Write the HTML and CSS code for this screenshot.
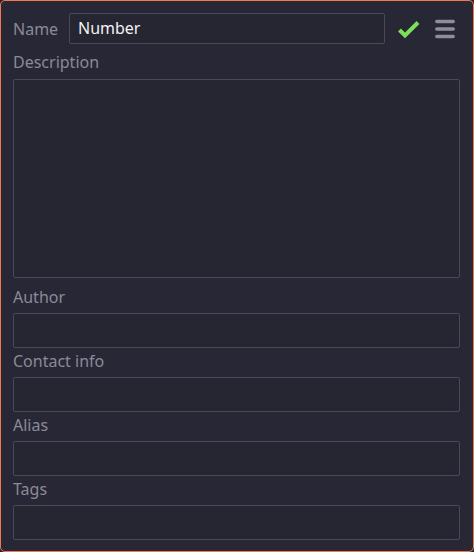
FILE: index.html
```html
<!DOCTYPE html>
<html>
<head>
<meta charset="utf-8">
<link rel="stylesheet" href="styles.css">
</head>
<body>
<div class="panel">
  <div class="name-row">
    <span class="label name-label">Name</span>
    <div class="field name-field">Number</div>
    <svg class="check" width="24" height="24" viewBox="0 0 24 24"><polyline points="3.5,13 9,18.5 22,5.5" fill="none" stroke="#7ee05a" stroke-width="4" stroke-linejoin="miter"/></svg>
    <svg class="menu" width="20" height="24" viewBox="0 0 20 24"><g stroke="#8e8d99" stroke-width="3.5" stroke-linecap="round"><line x1="1.8" y1="4.5" x2="18.2" y2="4.5"/><line x1="1.8" y1="12" x2="18.2" y2="12"/><line x1="1.8" y1="19.5" x2="18.2" y2="19.5"/></g></svg>
  </div>
  <div class="label block-label desc-label">Description</div>
  <div class="field area"></div>
  <div class="label block-label author-label">Author</div>
  <div class="field line"></div>
  <div class="label block-label">Contact info</div>
  <div class="field line"></div>
  <div class="label block-label">Alias</div>
  <div class="field line"></div>
  <div class="label block-label">Tags</div>
  <div class="field line"></div>
</div>
</body>
</html>
```
FILE: styles.css
```css
html, body {
  margin: 0;
  padding: 0;
  background: #282735;
}
.panel {
  box-sizing: border-box;
  width: 474px;
  height: 552px;
  border: 1px solid #f07a4c;
  border-radius: 5px;
  background: #282735;
  padding: 12px 13px 10px 12px;
  font-family: "Noto Sans", sans-serif;
  font-size: 16px;
  display: flex;
  flex-direction: column;
}
.label {
  color: #8b8a97;
  line-height: 20px;
}
.name-row {
  display: flex;
  align-items: center;
  height: 31px;
  flex-shrink: 0;
}
.name-label {
  width: 56px;
}
.field {
  box-sizing: border-box;
  border: 1px solid #4a4958;
  border-radius: 2px;
  background: #262532;
  flex-shrink: 0;
}
.name-field {
  width: 316px;
  height: 31px;
  color: #f2f2f4;
  padding: 0 8px;
  line-height: 29px;
}
.check {
  margin-left: 11px;
}
.menu {
  margin-left: 15px;
}
.block-label {
  flex-shrink: 0;
  padding: 3px 0 6px 0;
}
.desc-label {
  padding: 8px 0 7px 0;
}
.author-label {
  padding: 9px 0 6px 0;
}
.area {
  height: 199px;
}
.line {
  height: 35px;
}
```
